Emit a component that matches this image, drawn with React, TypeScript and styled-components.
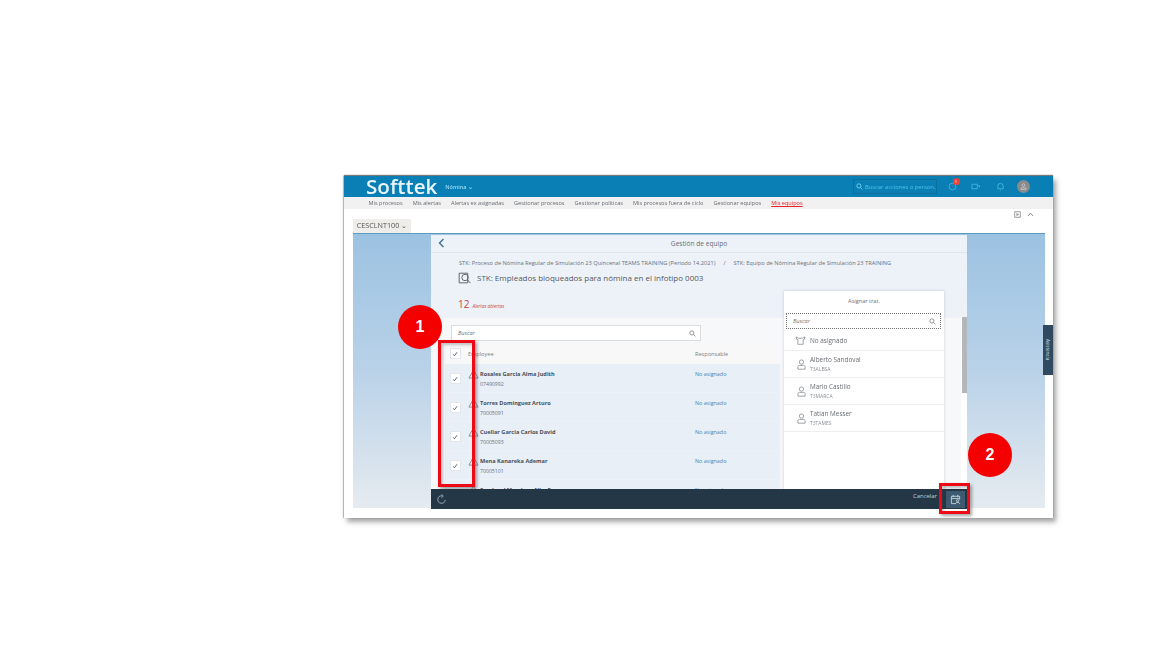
import React from "react";
import styled, { createGlobalStyle } from "styled-components";

const Global = createGlobalStyle`
  html, body { margin: 0; padding: 0; background: #fff; }
  body { font-family: "Open Sans", "Liberation Sans", sans-serif; }
  #root { width: 1152px; height: 648px; overflow: hidden; }
`;

const Page = styled.div`
  position: relative;
  width: 1152px;
  height: 648px;
  background: #fff;
  padding: 176px 0 0 344px;
  box-sizing: border-box;
`;

const Screenshot = styled.div`
  position: relative;
  width: 709px;
  height: 342px;
  background: #fff;
  display: flex;
  flex-direction: column;
  box-shadow: 3px 4px 5px rgba(90, 90, 90, 0.55), 0 -1px 1px rgba(70, 70, 70, 0.7), -1px 0 1px rgba(190, 190, 190, 0.8);
  filter: blur(0.5px);
`;

const Header = styled.header`
  height: 21px;
  flex: none;
  background: #0a7fb5;
  display: flex;
  align-items: center;
  padding: 0 0 0 22px;
`;

const Logo = styled.span`
  font: 600 20.6px "Open Sans", sans-serif;
  color: #e8f6fb;
  line-height: 21px;
`;

const Module = styled.span`
  font-size: 5.5px;
  font-weight: 600;
  color: #9adcf3;
  margin-left: 8px;
`;

const HeaderRight = styled.div`
  margin-left: auto;
  display: flex;
  align-items: center;
  padding-right: 23.5px;
`;

const HeaderSearch = styled.div`
  width: 84px;
  height: 15px;
  box-sizing: border-box;
  border: 1px solid #0b6f99;
  display: flex;
  align-items: center;
  gap: 2px;
  padding-left: 2px;
  font-size: 5.8px;
  color: #4fc3ea;
  white-space: nowrap;
  overflow: hidden;
`;

const SearchGlyph = styled.span`
  display: flex;
  color: #7fe0ff;
`;

const HeaderIcon = styled.span<{ $gap: number }>`
  position: relative;
  width: 9px;
  height: 9px;
  margin-left: ${(p) => p.$gap}px;
  color: #45b4dc;
  display: flex;
`;

const Badge = styled.span`
  position: absolute;
  top: -4px;
  right: -3px;
  width: 7px;
  height: 7px;
  border-radius: 50%;
  background: #e8453c;
  color: #fff;
  font-size: 4px;
  line-height: 7px;
  text-align: center;
`;

const Avatar = styled.span`
  width: 13px;
  height: 13px;
  margin-left: 12px;
  border-radius: 50%;
  background: #8a8a8a;
  display: flex;
  align-items: center;
  justify-content: center;
  color: #d5d5d5;
`;

const Nav = styled.nav`
  height: 12px;
  flex: none;
  background: #f1f1f1;
  display: flex;
  align-items: center;
  padding-left: 24.5px;
  gap: 10px;
  font-size: 5.6px;
  white-space: nowrap;
`;

const NavItem = styled.span<{ $active?: boolean }>`
  color: ${(p) => (p.$active ? "#e8212a" : "#666a70")};
  text-decoration: ${(p) => (p.$active ? "underline" : "none")};
`;

const Toolbar = styled.div`
  height: 24px;
  flex: none;
  display: flex;
  align-items: flex-end;
  padding: 0 19px 0 9px;
`;

const ClientTab = styled.div`
  width: 58px;
  height: 14px;
  background: #efedea;
  font-size: 7.2px;
  color: #555;
  display: flex;
  align-items: center;
  justify-content: center;
  white-space: nowrap;
  padding-bottom: 2px;
  box-sizing: border-box;
`;

const ToolIcons = styled.div`
  margin-left: auto;
  align-self: flex-start;
  margin-top: 2px;
  display: flex;
  gap: 6px;
  color: #777;
`;

const Stage = styled.div`
  position: relative;
  margin: 0 8px 0 9px;
  height: 275px;
  flex: none;
  border-top: 1px solid #5b9dc0;
  box-sizing: border-box;
  background: linear-gradient(180deg, #9cc2e2 0%, #b9d2e8 50%, #e6ebf0 100%);
  display: flex;
  padding-left: 78px;
`;

const Panel = styled.section`
  width: 536px;
  height: 274px;
  margin-top: 1px;
  background: #edf2f9;
  display: flex;
  flex-direction: column;
  position: relative;
`;

const PanelTitle = styled.div`
  height: 17px;
  flex: none;
  border-bottom: 1px solid #e2e6ec;
  display: flex;
  align-items: center;
  justify-content: center;
  font-size: 6.6px;
  color: #6a6d72;
  position: relative;
`;

const Back = styled.span`
  position: absolute;
  left: 7px;
  top: 3px;
  color: #3b6f96;
  display: flex;
`;

const Crumbs = styled.div`
  padding: 6px 0 0 28px;
  font-size: 5.7px;
  line-height: 8px;
  height: 8px;
  color: #6c7076;
  white-space: nowrap;
  display: flex;
  gap: 8px;
`;

const TitleRow = styled.div`
  display: flex;
  align-items: center;
  gap: 5px;
  padding: 3px 0 0 26px;
  height: 15px;
  font-size: 8px;
  color: #55585c;
  white-space: nowrap;
`;

const Alerts = styled.div`
  display: flex;
  align-items: baseline;
  gap: 3px;
  padding: 12px 0 0 27px;
  height: 14px;
  color: #c9423f;
`;

const AlertCount = styled.span`
  font-size: 10px;
`;

const AlertLabel = styled.span`
  font-size: 4.6px;
  font-style: italic;
`;

const ListArea = styled.div`
  margin-top: 7px;
  flex: 1;
  min-height: 0;
  overflow: hidden;
  background: #f7f8fa;
  padding: 7px 0 0 14px;
  display: flex;
  flex-direction: column;
`;

const SearchBox = styled.div<{ $dashed?: boolean }>`
  height: 16px;
  box-sizing: border-box;
  background: #fff;
  border: 1px ${(p) => (p.$dashed ? "dotted #6f6f6f" : "solid #dcdcdc")};
  display: flex;
  align-items: center;
  justify-content: space-between;
  padding: 0 4px 0 6px;
  font-size: 5.6px;
  font-style: italic;
  color: #777;
`;

const MainSearch = styled(SearchBox)`
  width: 250px;
  margin-left: 6px;
`;

const TableHead = styled.div`
  margin-top: 4px;
  height: 19px;
  flex: none;
  width: 335px;
  box-sizing: border-box;
  background: #f8f8f8;
  display: grid;
  grid-template-columns: 20px 3px 227px 1fr;
  align-items: center;
  font-size: 5.6px;
  color: #7d8186;
  padding-bottom: 2px;
`;

const Row = styled.div`
  height: 29px;
  flex: none;
  width: 335px;
  box-sizing: border-box;
  background: #e8eff7;
  border-bottom: 1px solid #eef1f5;
  display: grid;
  grid-template-columns: 20px 15px 215px 1fr;
  align-items: start;
`;

const CheckCell = styled.div<{ $top?: number }>`
  display: flex;
  justify-content: center;
  padding-top: ${(p) => p.$top ?? 9}px;
`;

const Check = styled.span`
  width: 9px;
  height: 9px;
  background: #fff;
  border: 0.5px solid #e3e6ea;
  display: flex;
  align-items: center;
  justify-content: center;
  color: #4a5a68;
`;

const WarnCell = styled.div`
  padding: 5px 0 0 3px;
  color: #84878c;
  display: flex;
`;

const NameCell = styled.div`
  padding-top: 5.5px;
`;

const Name = styled.div`
  font-size: 5.6px;
  line-height: 8px;
  font-weight: 700;
  color: #4b4f55;
  white-space: nowrap;
`;

const Code = styled.div`
  font-size: 5.2px;
  line-height: 8px;
  margin-top: 2px;
  color: #6d7176;
`;

const Assigned = styled.div`
  padding-top: 6px;
  font-size: 5.4px;
  line-height: 8px;
  color: #4f84ad;
  white-space: nowrap;
`;

const Footer = styled.footer`
  position: absolute;
  left: 0;
  right: 0;
  bottom: 0;
  height: 20px;
  background: #243746;
  display: flex;
  align-items: center;
  padding: 0 2px 0 5px;
  z-index: 3;
`;

const Refresh = styled.span`
  color: #9fb1be;
  display: flex;
`;

const Cancel = styled.span`
  margin-left: auto;
  margin-right: 9px;
  margin-top: -6px;
  font-size: 5.9px;
  color: #c4ced5;
`;

const SaveButton = styled.span`
  width: 19px;
  height: 17px;
  background: #3d5a70;
  display: flex;
  align-items: center;
  justify-content: center;
  color: #d4dee6;
`;

const Scroll = styled.div`
  position: absolute;
  right: 0;
  top: 82px;
  width: 5px;
  height: 76px;
  background: #b3b6ba;
  z-index: 1;
`;

const ScrollTrack = styled.div`
  position: absolute;
  right: 0;
  top: 82px;
  bottom: 20px;
  width: 6px;
  background: #fff;
`;

const Popover = styled.aside`
  position: absolute;
  left: 353px;
  top: 56px;
  width: 160px;
  height: 198px;
  background: #fff;
  box-shadow: 0 0 3px rgba(120, 130, 140, 0.35);
  display: flex;
  flex-direction: column;
  z-index: 2;
`;

const PopTitle = styled.div`
  height: 22px;
  flex: none;
  display: flex;
  align-items: center;
  justify-content: center;
  font-size: 5.6px;
  color: #6b6f74;
  padding-bottom: 3px;
  box-sizing: border-box;
`;

const PopSearch = styled(SearchBox)`
  margin: 0 3px 0 2px;
`;

const PopRow = styled.div<{ $single?: boolean }>`
  height: ${(p) => (p.$single ? 22 : 27)}px;
  padding-top: ${(p) => (p.$single ? 2 : 0)}px;
  flex: none;
  box-sizing: border-box;
  border-bottom: 1px solid #eeeeee;
  display: grid;
  grid-template-columns: 26px 1fr;
  align-items: center;
  color: #8b8f94;
`;

const PopIcon = styled.span`
  display: flex;
  justify-content: flex-end;
  padding-right: 4px;
`;

const PopName = styled.div`
  font-size: 6.4px;
  line-height: 9px;
  color: #696d72;
`;

const PopCode = styled.div`
  font-size: 5px;
  line-height: 7px;
  margin-top: 2px;
  color: #8b8f94;
`;

const Assist = styled.div`
  position: absolute;
  right: -8px;
  top: 91px;
  width: 10px;
  height: 50px;
  background: #2f4a60;
  color: #d7e0e6;
  font-size: 4.6px;
  display: flex;
  align-items: center;
  justify-content: center;
  writing-mode: vertical-rl;
  z-index: 1;
`;

const Highlight = styled.div<{ $x: number; $y: number; $w: number; $h: number }>`
  position: absolute;
  left: ${(p) => p.$x}px;
  top: ${(p) => p.$y}px;
  width: ${(p) => p.$w}px;
  height: ${(p) => p.$h}px;
  box-sizing: border-box;
  border: 3px solid #ee0a14;
  box-shadow: 2px 2px 3px rgba(60, 60, 60, 0.45), inset 2px 2px 3px rgba(60, 60, 60, 0.3);
  z-index: 5;
`;

const Marker = styled.div<{ $x: number; $y: number }>`
  position: absolute;
  left: ${(p) => p.$x}px;
  top: ${(p) => p.$y}px;
  width: 44px;
  height: 44px;
  border-radius: 50%;
  background: #f40000;
  color: #fff;
  font: 700 16px "Liberation Sans", Arial, sans-serif;
  display: flex;
  align-items: center;
  justify-content: center;
  z-index: 6;
`;

const Search = ({ size = 7 }: { size?: number }) => (
  <svg width={size} height={size} viewBox="0 0 12 12" fill="none" stroke="currentColor" strokeWidth="1.3">
    <circle cx="5" cy="5" r="3.6" />
    <path d="M7.8 7.8 11 11" />
  </svg>
);

const CheckMark = () => (
  <svg width="6" height="6" viewBox="0 0 10 10" fill="none" stroke="currentColor" strokeWidth="1.5">
    <path d="M2 5.5 4 8 8.5 2" />
  </svg>
);

const Warn = () => (
  <svg width="11" height="10" viewBox="0 0 12 11" fill="none" stroke="currentColor" strokeWidth="1">
    <path d="M6 1 11 10H1Z" />
  </svg>
);

const Person = () => (
  <svg width="9" height="11" viewBox="0 0 10 12" fill="none" stroke="currentColor" strokeWidth="0.9">
    <circle cx="5" cy="3.3" r="2.4" />
    <path d="M1 11.2V8.6C1 7.6 1.8 7 2.8 7h4.4C8.2 7 9 7.6 9 8.6v2.6Z" />
  </svg>
);

const Unassigned = () => (
  <svg width="11" height="9" viewBox="0 0 12 10" fill="none" stroke="currentColor" strokeWidth="0.9">
    <path d="M1 1 4 2.5H8L11 1 10 4H9V9.2H3V4H2Z" />
  </svg>
);

const Save = () => (
  <svg width="11" height="11" viewBox="0 0 12 12" fill="none" stroke="currentColor" strokeWidth="0.9">
    <path d="M6 10.5H1.5V2.5h9V6" />
    <path d="M1.5 5H10.5M3.5 1v2.5M8.5 1v2.5" />
    <circle cx="8.3" cy="7.4" r="1.2" />
    <path d="M6 11c0-1.2 1-1.8 2.3-1.8s2.3.6 2.3 1.8" />
  </svg>
);

const employees = [
  { name: "Rosales Garcia Alma Judith", code: "07490992" },
  { name: "Torres Dominguez Arturo", code: "70005091" },
  { name: "Cuellar Garcia Carlos David", code: "70005093" },
  { name: "Mena Kanareka Ademar", code: "70005101" },
  { name: "Sandoval Mendoza Alba R.", code: "70005102" },
];

const team = [
  { name: "Alberto Sandoval", code: "T3ALBSA" },
  { name: "Mario Castillo", code: "T3MARCA" },
  { name: "Tatian Messer", code: "T3TAMES" },
];

const navItems = [
  "Mis procesos",
  "Mis alertas",
  "Alertas ex asignadas",
  "Gestionar procesos",
  "Gestionar políticas",
  "Mis procesos fuera de ciclo",
  "Gestionar equipos",
];

export default function App() {
  return (
    <Page>
      <Global />
      <Screenshot>
        <Header>
          <Logo>Softtek</Logo>
          <Module>Nómina ⌄</Module>
          <HeaderRight>
            <HeaderSearch>
              <SearchGlyph>
                <Search />
              </SearchGlyph>
              Buscar acciones o person...
            </HeaderSearch>
            <HeaderIcon $gap={10.5}>
              <svg width="9" height="9" viewBox="0 0 10 10" fill="none" stroke="currentColor">
                <circle cx="5" cy="5" r="3.8" />
              </svg>
              <Badge>1</Badge>
            </HeaderIcon>
            <HeaderIcon $gap={14}>
              <svg width="9" height="9" viewBox="0 0 10 10" fill="none" stroke="currentColor">
                <path d="M1 2.5h6v5H1ZM7 4h2.5v2" />
              </svg>
            </HeaderIcon>
            <HeaderIcon $gap={16}>
              <svg width="9" height="9" viewBox="0 0 10 10" fill="none" stroke="currentColor">
                <path d="M2 7.5V4.5a3 3 0 0 1 6 0v3ZM4.4 9h1.2" />
              </svg>
            </HeaderIcon>
            <Avatar>
              <svg width="7" height="7" viewBox="0 0 10 10" fill="none" stroke="currentColor">
                <circle cx="5" cy="3" r="2" />
                <path d="M1.5 9.5V7h7v2.5Z" />
              </svg>
            </Avatar>
          </HeaderRight>
        </Header>
        <Nav>
          {navItems.map((item) => (
            <NavItem key={item}>{item}</NavItem>
          ))}
          <NavItem $active>Mis equipos</NavItem>
        </Nav>
        <Toolbar>
          <ClientTab>CESCLNT100 ⌄</ClientTab>
          <ToolIcons>
            <svg width="7" height="7" viewBox="0 0 10 10" fill="none" stroke="currentColor">
              <path d="M1 1h8v8H1ZM4 3.5 6.5 5 4 6.5Z" />
            </svg>
            <svg width="7" height="7" viewBox="0 0 10 10" fill="none" stroke="currentColor" strokeWidth="1.3">
              <path d="M1.5 7 5 3l3.5 4" />
            </svg>
          </ToolIcons>
        </Toolbar>
        <Stage>
          <Panel>
            <PanelTitle>
              <Back>
                <svg width="7" height="10" viewBox="0 0 7 10" fill="none" stroke="currentColor" strokeWidth="1.4">
                  <path d="M5.5 1 1.5 5l4 4" />
                </svg>
              </Back>
              Gestión de equipo
            </PanelTitle>
            <Crumbs>
              <span>STK: Proceso de Nómina Regular de Simulación 23 Quincenal TEAMS TRAINING (Periodo 14.2021)</span>
              <span>/</span>
              <span>STK: Equipo de Nómina Regular de Simulación 23 TRAINING</span>
            </Crumbs>
            <TitleRow>
              <svg width="15" height="15" viewBox="0 0 14 14" fill="none" stroke="#5f6368" strokeWidth="0.9">
                <path d="M2 3h8v9H2Z" />
                <circle cx="7.5" cy="7" r="3" />
                <path d="m9.8 9.2 2.7 3" />
              </svg>
              STK: Empleados bloqueados para nómina en el infotipo 0003
            </TitleRow>
            <Alerts>
              <AlertCount>12</AlertCount>
              <AlertLabel>Alertas abiertas</AlertLabel>
            </Alerts>
            <ListArea>
              <MainSearch>
                Buscar
                <Search />
              </MainSearch>
              <TableHead>
                <CheckCell $top={0}>
                  <Check>
                    <CheckMark />
                  </Check>
                </CheckCell>
                <span />
                <span>Employee</span>
                <span>Responsable</span>
              </TableHead>
              {employees.map((e) => (
                <Row key={e.code}>
                  <CheckCell>
                    <Check>
                      <CheckMark />
                    </Check>
                  </CheckCell>
                  <WarnCell>
                    <Warn />
                  </WarnCell>
                  <NameCell>
                    <Name>{e.name}</Name>
                    <Code>{e.code}</Code>
                  </NameCell>
                  <Assigned>No asignado</Assigned>
                </Row>
              ))}
            </ListArea>
            <ScrollTrack />
            <Scroll />
            <Popover>
              <PopTitle>Asignar trat.</PopTitle>
              <PopSearch $dashed>
                Buscar
                <Search />
              </PopSearch>
              <PopRow $single>
                <PopIcon>
                  <Unassigned />
                </PopIcon>
                <PopName>No asignado</PopName>
              </PopRow>
              {team.map((m) => (
                <PopRow key={m.code}>
                  <PopIcon>
                    <Person />
                  </PopIcon>
                  <div>
                    <PopName>{m.name}</PopName>
                    <PopCode>{m.code}</PopCode>
                  </div>
                </PopRow>
              ))}
            </Popover>
            <Footer>
              <Refresh>
                <svg width="11" height="11" viewBox="0 0 12 12" fill="none" stroke="currentColor" strokeWidth="1">
                  <path d="M10 6.5A4 4 0 1 1 6.5 2.1M6 .5l2 1.8L6 4" />
                </svg>
              </Refresh>
              <Cancel>Cancelar</Cancel>
              <SaveButton>
                <Save />
              </SaveButton>
            </Footer>
          </Panel>
          <Assist>Asistencia</Assist>
        </Stage>
      </Screenshot>
      <Highlight $x={438} $y={340} $w={37} $h={147} />
      <Highlight $x={939} $y={483} $w={31} $h={31} />
      <Marker $x={398} $y={305}>1</Marker>
      <Marker $x={968} $y={433}>2</Marker>
    </Page>
  );
}
